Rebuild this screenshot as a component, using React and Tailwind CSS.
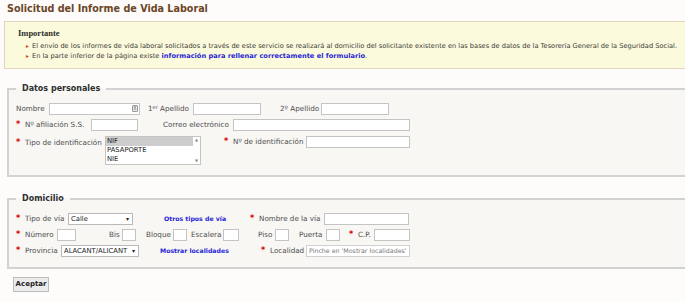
import React from "react";

const font = { fontFamily: '"DejaVu Sans", Verdana, sans-serif' };

function Star() {
  return <span className="w-[9px] shrink-0 text-[8px] font-bold leading-none text-[#d40000]">*</span>;
}

function Label({ w, className = "", children }) {
  return (
    <span className={`shrink-0 whitespace-nowrap text-[7.2px] leading-none text-[#4d4d4d] ${w} ${className}`}>
      {children}
    </span>
  );
}

function Input({ w, children, className = "" }) {
  return (
    <span
      className={`relative block h-[12px] shrink-0 border border-[#c4c4c4] bg-white ${w} ${className}`}
    >
      {children}
    </span>
  );
}

function Dropdown({ w, value }) {
  return (
    <span
      className={`flex h-[12px] shrink-0 items-center justify-between border border-[#b9b9b9] bg-white pl-[2px] pr-[3px] text-[6.8px] leading-none text-[#222] ${w}`}
    >
      <span className="whitespace-nowrap">{value}</span>
      <span className="text-[6px]">▾</span>
    </span>
  );
}

function BlueLink({ w, className = "", children }) {
  return (
    <span
      className={`shrink-0 whitespace-nowrap text-[6.2px] font-bold leading-none text-[#1f1fd6] ${w} ${className}`}
    >
      {children}
    </span>
  );
}

export default function App() {
  return (
    <div className="h-[302px] w-[685px] overflow-hidden bg-[#fdfcfa]" style={font}>
      {/* Title */}
      <h1 className="px-[7px] pt-[3px] text-[9.6px] font-bold leading-[12px] text-[#6b4526]">
        Solicitud del Informe de Vida Laboral
      </h1>

      {/* Notice */}
      <div className="ml-[4px] mt-[6px] h-[48px] w-[700px] border border-[#e2d5bf] bg-[#fcfadc] pl-[13px] pt-[6px]">
        <div
          className="text-[8.5px] font-bold leading-[10px] text-[#2d2d2d]"
          style={{ fontFamily: '"Liberation Serif", Georgia, serif' }}
        >
          Importante
        </div>
        <ul className="mt-[3px] text-[6.65px] leading-[10px] text-[#3a3a3a]">
          <li className="flex">
            <span className="w-[8px] pl-[8px] text-[6px] text-[#d34b1f]">▸</span>
            <span className="pl-[6px]">
              El envío de los informes de vida laboral solicitados a través de este servicio se realizará al domicilio del solicitante existente en las bases de datos de la Tesorería General de la Seguridad Social.
            </span>
          </li>
          <li className="flex">
            <span className="w-[8px] pl-[8px] text-[6px] text-[#d34b1f]">▸</span>
            <span className="pl-[6px]">
              En la parte inferior de la página existe{" "}
              <span className="font-bold text-[#1f1fd6]">información para rellenar correctamente el formulario</span>.
            </span>
          </li>
        </ul>
      </div>

      {/* Datos personales */}
      <fieldset className="ml-[7px] mt-[14px] h-[94px] w-[700px] border-2 border-[#d2d2d2] bg-[#f8f7f4] pl-[7px]">
        <legend className="px-[6px] text-[8px] font-bold leading-[12px] text-[#2f2f2f]">Datos personales</legend>

        <div className="mt-[8px] flex items-center">
          <Label w="w-[33px]">Nombre</Label>
          <Input w="w-[91px]">
            <span className="absolute right-[1px] top-[1px] flex h-[7px] w-[6px] items-center justify-center rounded-[1px] border border-[#9a9a9a] bg-[#e4e4e4] text-[5px] font-bold leading-none text-[#555]">
              !
            </span>
          </Input>
          <Label w="w-[45px]" className="ml-[8px]">
            1<sup className="text-[5px]">er</sup> Apellido
          </Label>
          <Input w="w-[68px]" />
          <Label w="w-[41px]" className="ml-[19px]">2º Apellido</Label>
          <Input w="w-[68px]" />
        </div>

        <div className="mt-[4px] flex items-center">
          <Star />
          <Label w="w-[66px]">Nº afiliación S.S.</Label>
          <Input w="w-[47px]" />
          <Label w="w-[70px]" className="ml-[25px]">Correo electrónico</Label>
          <Input w="w-[177px]" />
        </div>

        <div className="mt-[5px] flex items-start">
          <div className="flex items-center pt-[3px]">
            <Star />
            <Label w="w-[80px]">Tipo de identificación</Label>
          </div>
          <div className="flex h-[29px] w-[96px] shrink-0 border border-[#c4c4c4] bg-white text-[6.8px] leading-[9px] text-[#222]">
            <div className="flex-1">
              <div className="bg-[#cdcdcd] pl-[1px]">NIF</div>
              <div className="pl-[1px]">PASAPORTE</div>
              <div className="pl-[1px]">NIE</div>
            </div>
            <div className="flex w-[7px] flex-col items-center justify-between text-[4px] leading-[6px] text-[#8a8a8a]">
              <span>▲</span>
              <span>▼</span>
            </div>
          </div>
          <div className="ml-[23px] flex items-center">
            <Star />
            <Label w="w-[73px]">Nº de identificación</Label>
            <Input w="w-[104px]" />
          </div>
        </div>
      </fieldset>

      {/* Domicilio */}
      <fieldset className="ml-[7px] mt-[16px] h-[76px] w-[700px] border-2 border-[#d2d2d2] bg-[#f8f7f4] pl-[7px]">
        <legend className="px-[6px] text-[8px] font-bold leading-[12px] text-[#2f2f2f]">Domicilio</legend>

        <div className="mt-[8px] flex items-center">
          <Star />
          <Label w="w-[43px]">Tipo de vía</Label>
          <Dropdown w="w-[65px]" value="Calle" />
          <BlueLink w="w-[86px]" className="ml-[31px]">Otros tipos de vía</BlueLink>
          <Star />
          <Label w="w-[65px]">Nombre de la vía</Label>
          <Input w="w-[85px]" />
        </div>

        <div className="mt-[4px] flex items-center">
          <Star />
          <Label w="w-[32px]">Número</Label>
          <Input w="w-[19px]" />
          <Label w="w-[13px]" className="ml-[33px]">Bis</Label>
          <Input w="w-[14px]" />
          <Label w="w-[27px]" className="ml-[10px]">Bloque</Label>
          <Input w="w-[14px]" />
          <Label w="w-[32px]" className="ml-[4px]">Escalera</Label>
          <Input w="w-[16px]" />
          <Label w="w-[17px]" className="ml-[19px]">Piso</Label>
          <Input w="w-[14px]" />
          <Label w="w-[27px]" className="ml-[10px]">Puerta</Label>
          <Input w="w-[14px]" />
          <span className="ml-[9px] flex">
            <Star />
          </span>
          <Label w="w-[16px]">C.P.</Label>
          <Input w="w-[36px]" />
        </div>

        <div className="mt-[4px] flex items-center">
          <Star />
          <Label w="w-[36px]">Provincia</Label>
          <Dropdown w="w-[78px]" value="ALACANT/ALICANT" />
          <BlueLink w="w-[101px]" className="ml-[21px]">Mostrar localidades</BlueLink>
          <Star />
          <Label w="w-[36px]">Localidad</Label>
          <Input w="w-[104px]" className="border-[#d0d0d0]">
            <span className="absolute left-[2px] top-[2px] whitespace-nowrap text-[6.3px] leading-none text-[#777]">
              Pinche en 'Mostrar localidades'
            </span>
          </Input>
        </div>
      </fieldset>

      <button className="ml-[13px] mt-[7px] h-[15px] w-[36px] border border-[#bdbdbd] bg-[#ebebeb] text-[7px] font-bold leading-none text-[#222]">
        Aceptar
      </button>
    </div>
  );
}
